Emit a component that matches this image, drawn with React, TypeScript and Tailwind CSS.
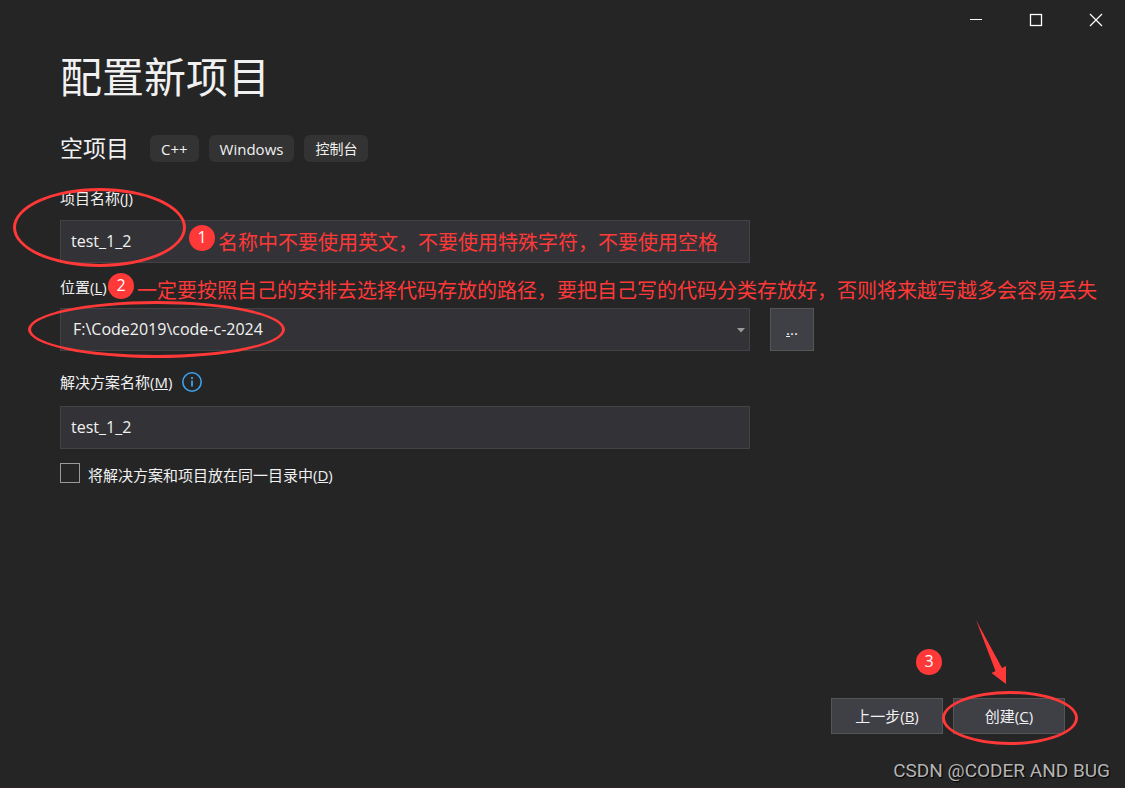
import { useState } from "react";

const fieldClass =
  "block h-[43px] w-full border border-[#434346] bg-[#333337] pb-0.5 text-base text-[#f1f1f1] outline-none";
const buttonClass =
  "border border-[#555555] bg-[#3f3f46] text-[15px] text-[#f1f1f1]";
const labelClass = "text-[15px] leading-5 text-[#f1f1f1]";
const noteClass =
  "absolute flex items-start gap-[3px] text-xl leading-6 whitespace-nowrap text-[#ff3838] pointer-events-none";

const tags = [
  { name: "C++", size: "text-[15px]" },
  { name: "Windows", size: "text-[15px]" },
  { name: "控制台", size: "text-sm" },
];

function Badge({ n }: { n: number }) {
  return (
    <span className="flex size-[26px] shrink-0 justify-center rounded-full bg-[#ff3838] text-base leading-6 text-white">
      {n}
    </span>
  );
}

function Ring({ className }: { className: string }) {
  return (
    <span
      className={`pointer-events-none absolute rounded-[50%] border-3 border-[#ff3838] ${className}`}
    />
  );
}

function TitleBar() {
  const btn = "flex h-10 w-[60px] items-center justify-center pl-0.5 text-white";
  return (
    <header className="flex justify-end">
      <button className={btn} aria-label="最小化">
        <svg width="14" height="14" stroke="currentColor">
          <path d="M1 6.5h12" />
        </svg>
      </button>
      <button className={btn} aria-label="最大化">
        <svg width="14" height="14" fill="none" stroke="currentColor">
          <rect x="1.5" y="1.5" width="11" height="11" strokeWidth="1.3" />
        </svg>
      </button>
      <button className={btn} aria-label="关闭">
        <svg width="14" height="14" fill="none" stroke="currentColor">
          <path d="M1 1l12 12M13 1L1 13" strokeWidth="1.2" />
        </svg>
      </button>
    </header>
  );
}

export default function App() {
  const [name, setName] = useState("test_1_2");
  const [solution, setSolution] = useState("test_1_2");
  const [sameDir, setSameDir] = useState(false);

  return (
    <div className="flex min-h-screen flex-col border-b border-[#2d232d] bg-[#252526] font-['Open_Sans','Noto_Sans_CJK_SC',sans-serif]">
      <TitleBar />
      <main className="flex grow flex-col px-[60px]">
        <h1 className="mt-[7px] text-[42px] leading-[60px] text-[#f1f1f1]">
          配置新项目
        </h1>
        <div className="mt-[27px] flex items-center">
          <h2 className="mr-[21px] text-[23px] leading-7 text-[#f1f1f1]">
            空项目
          </h2>
          <ul className="flex gap-2.5">
            {tags.map((tag) => (
              <li
                key={tag.name}
                className={`h-[27px] rounded-md bg-[#333333] px-[11px] leading-7 text-[#f1f1f1] ${tag.size}`}
              >
                {tag.name}
              </li>
            ))}
          </ul>
        </div>

        <div className="relative mt-[26px] max-w-[690px]">
          <label htmlFor="name" className={`${labelClass} block`}>
            项目名称(<u>J</u>)
          </label>
          <input
            id="name"
            className={`${fieldClass} mt-3 px-2.5`}
            value={name}
            onChange={(e) => setName(e.target.value)}
          />
          <Ring className="top-0 -left-[47px] h-[79px] w-[173px]" />
          <div className={`${noteClass} top-[37px] left-[129px]`}>
            <Badge n={1} />
            <span className="pt-1.5">
              名称中不要使用英文，不要使用特殊字符，不要使用空格
            </span>
          </div>
        </div>

        <div className="relative mt-3.5">
          <label htmlFor="location" className={`${labelClass} block`}>
            位置(<u>L</u>)
          </label>
          <div className="mt-[11px] flex gap-5">
            <div className="relative max-w-[690px] grow">
              <select
                id="location"
                className={`${fieldClass} appearance-none px-3`}
              >
                <option>F:\Code2019\code-c-2024</option>
              </select>
              <svg
                className="pointer-events-none absolute top-5 right-[5px]"
                width="8"
                height="5"
                fill="#999999"
              >
                <path d="M0 0h8L4 4.5z" />
              </svg>
            </div>
            <button className={`${buttonClass} h-[43px] w-11`}>
              <u>.</u>..
            </button>
          </div>
          <Ring className="top-6 -left-8 h-[57px] w-[257px]" />
          <div className={`${noteClass} -top-1 left-12`}>
            <Badge n={2} />
            <span className="pt-1.5">
              一定要按照自己的安排去选择代码存放的路径，要把自己写的代码分类存放好，否则将来越写越多会容易丢失
            </span>
          </div>
        </div>

        <div className="mt-[21px] max-w-[690px]">
          <div className="flex items-center gap-2.5">
            <label htmlFor="solution" className={labelClass}>
              解决方案名称(<u>M</u>)
            </label>
            <svg width="20" height="20" fill="none" stroke="#3ea1ee">
              <circle cx="10" cy="10" r="9.2" strokeWidth="1.6" />
              <path d="M10 8.5v6M10 5v2" strokeWidth="1.8" />
            </svg>
          </div>
          <input
            id="solution"
            className={`${fieldClass} mt-3.5 px-2.5`}
            value={solution}
            onChange={(e) => setSolution(e.target.value)}
          />
        </div>

        <div className="mt-3.5 flex items-start gap-2">
          <input
            id="same-dir"
            type="checkbox"
            className="size-5 appearance-none border border-[#999999] bg-[#252526] checked:bg-[#999999]"
            checked={sameDir}
            onChange={(e) => setSameDir(e.target.checked)}
          />
          <label htmlFor="same-dir" className={`${labelClass} pt-0.5`}>
            将解决方案和项目放在同一目录中(<u>D</u>)
          </label>
        </div>
      </main>

      <footer className="flex flex-col items-end">
        <div className="relative mr-[60px] flex gap-2.5">
          <button className={`${buttonClass} h-9 w-28`}>
            上一步(<u>B</u>)
          </button>
          <button className={`${buttonClass} h-9 w-28`}>
            创建(<u>C</u>)
          </button>
          <Ring className="-top-[7px] -right-[13px] h-[54px] w-[136px]" />
          <div className="absolute -top-[49px] left-[85px]">
            <Badge n={3} />
          </div>
          <svg
            className="pointer-events-none absolute right-[58px] bottom-[50px]"
            width="32"
            height="64"
            fill="#ff3838"
          >
            <path d="M1 0L27 48L31 46V64L16.500 53L20.500 51Z" />
          </svg>
        </div>
        <p className="mt-[25px] mr-[15px] mb-1 font-['Roboto',sans-serif] text-[19px] leading-6 text-[#b4b4b4] [text-shadow:1px_1px_1px_#000]">
          CSDN @CODER AND BUG
        </p>
      </footer>
    </div>
  );
}
